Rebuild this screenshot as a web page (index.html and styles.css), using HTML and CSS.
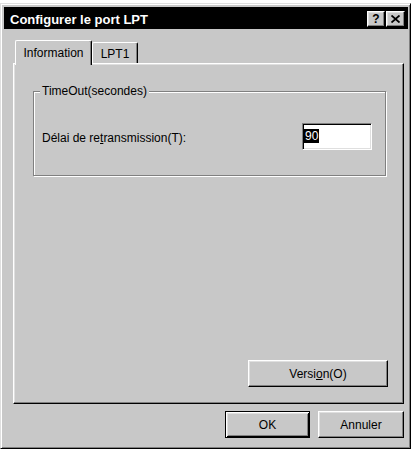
FILE: index.html
```html
<!DOCTYPE html>
<html lang="fr">
<head>
<meta charset="utf-8">
<title>Configurer le port LPT</title>
<link rel="stylesheet" href="styles.css">
</head>
<body>
<div class="window">
  <div class="titlebar">
    <span class="title">Configurer le port LPT</span>
    <div class="caption-buttons">
      <span class="cap-btn help">?</span>
      <span class="cap-btn close">
        <svg width="9" height="8" viewBox="0 0 9 8"><path d="M0.5 0.5 L8.5 7.5 M8.5 0.5 L0.5 7.5" stroke="#000" stroke-width="1.8" fill="none"/></svg>
      </span>
    </div>
  </div>
  <div class="content">
    <div class="tabs">
      <div class="tab selected">Information</div>
      <div class="tab">LPT1</div>
    </div>
    <div class="panel">
      <fieldset class="group">
        <legend class="legend">TimeOut(secondes)</legend>
        <div class="row">
          <span class="label">Délai de re<u>t</u>ransmission(T):</span>
          <div class="input"><span class="sel">90</span></div>
        </div>
      </fieldset>
      <button class="btn version">Versi<u>o</u>n(O)</button>
    </div>
    <div class="footer">
      <button class="btn ok default">OK</button>
      <button class="btn cancel">Annuler</button>
    </div>
  </div>
</div>
</body>
</html>
```

FILE: styles.css
```css
html, body {
  margin: 0;
  padding: 0;
  background: #ffffff;
}

body {
  font-family: "Liberation Sans", Arial, sans-serif;
  font-size: 12px;
  color: #000;
}

.window {
  box-sizing: border-box;
  width: 411px;
  height: 446px;
  margin-top: 3px;
  background: #c8c8c8;
  border: 1px solid;
  border-color: #dfdfdf #000 #000 #dfdfdf;
  box-shadow: inset 1px 1px #fff, inset -1px -1px #808080;
  padding: 3px 2px 2px 3px;
  display: flex;
  flex-direction: column;
}

.titlebar {
  height: 22px;
  background: #000;
  display: flex;
  align-items: center;
  padding: 0 3px 0 6px;
}

.title {
  color: #fff;
  font-weight: bold;
  font-size: 13px;
  flex: 1;
  padding-top: 3px;
}

.caption-buttons {
  display: flex;
  gap: 1px;
  padding-top: 2px;
}

.cap-btn {
  box-sizing: border-box;
  height: 16px;
  width: 18px;
  background: #c8c8c8;
  border: 1px solid;
  border-color: #fff #000 #000 #fff;
  box-shadow: inset -1px -1px #808080, inset 1px 1px #dfdfdf;
  display: flex;
  align-items: center;
  justify-content: center;
  font-weight: bold;
  font-size: 12px;
  line-height: 1;
}

.cap-btn.close {
  width: 19px;
}

.content {
  flex: 1;
  display: flex;
  flex-direction: column;
  padding: 11px 4px 0 9px;
}

.tabs {
  display: flex;
  align-items: flex-end;
  height: 23px;
  padding-left: 2px;
}

.tab {
  box-sizing: border-box;
  height: 21px;
  width: 46px;
  background: #c8c8c8;
  border-top: 1px solid #fff;
  border-left: 1px solid #fff;
  border-right: 1px solid #000;
  box-shadow: inset -1px 0 #808080;
  border-top-left-radius: 2px;
  border-top-right-radius: 2px;
  display: flex;
  align-items: center;
  justify-content: center;
  padding-top: 1px;
}

.tab.selected {
  position: relative;
  z-index: 1;
  width: 77px;
  height: 25px;
  margin-bottom: -2px;
  padding-bottom: 2px;
}

.panel {
  box-sizing: border-box;
  height: 341px;
  border: 1px solid;
  border-color: #fff #000 #000 #fff;
  box-shadow: inset -1px -1px #808080, inset 1px 1px #dfdfdf;
  display: flex;
  flex-direction: column;
  padding: 20px 15px 16px 19px;
}

.group {
  margin: 0;
  width: 353px;
  box-sizing: border-box;
  border: 1px solid #808080;
  box-shadow: inset 1px 1px #fff, 1px 1px #fff;
  padding: 25px 13px 25px 6px;
  min-width: 0;
}

.legend {
  padding: 0 2px;
  line-height: 14px;
  background: #c8c8c8;
}

.row {
  display: flex;
  align-items: center;
  padding-left: 2px;
}

.label {
  flex: 1;
  padding-top: 3px;
}

.input {
  box-sizing: border-box;
  width: 70px;
  height: 27px;
  background: #fff;
  border: 1px solid;
  border-color: #808080 #fff #fff #808080;
  box-shadow: inset 1px 1px #000, inset -1px -1px #dfdfdf;
  display: flex;
  align-items: center;
  padding-left: 1px;
  padding-bottom: 2px;
}

.sel {
  background: #000;
  color: #fff;
  line-height: 14px;
  padding: 0 1px 0 1px;
}

.btn {
  box-sizing: border-box;
  height: 27px;
  font-family: "Liberation Sans", Arial, sans-serif;
  font-size: 12px;
  color: #000;
  background: #c8c8c8;
  border: 1px solid;
  border-color: #fff #000 #000 #fff;
  box-shadow: inset -1px -1px #808080, inset 1px 1px #dfdfdf;
  padding: 0;
  border-radius: 0;
}

.version {
  align-self: flex-end;
  margin-top: auto;
  width: 140px;
}

.footer {
  display: flex;
  justify-content: flex-end;
  gap: 8px;
  margin-top: 7px;
}

.ok {
  width: 85px;
}

.cancel {
  width: 86px;
}

.btn.default {
  border: 1px solid #000;
  box-shadow: inset 1px 1px #fff, inset -1px -1px #000, inset 2px 2px #dfdfdf, inset -2px -2px #808080;
}
```
